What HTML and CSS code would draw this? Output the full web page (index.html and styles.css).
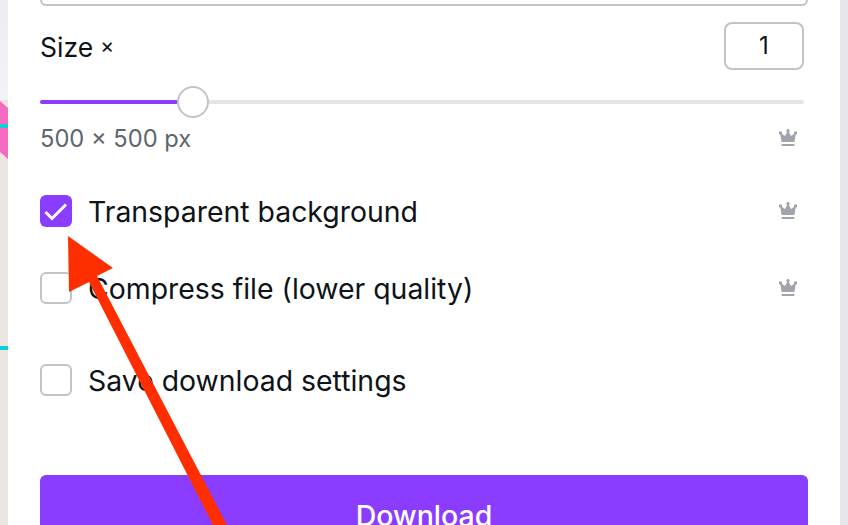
FILE: index.html
```html
<!DOCTYPE html>
<html lang="en">
<head>
    <meta charset="UTF-8">
    <title>Download</title>
    <link rel="stylesheet" href="styles.css">
</head>
<body>
    <div class="page">
        <div class="side-left">
            <div class="pink"></div>
            <div class="cyan cyan-top"></div>
            <div class="cyan cyan-bottom"></div>
        </div>

        <div class="panel">
            <div class="field-end"></div>

            <div class="size-row">
                <span class="size-label">Size <span class="times">×</span></span>
                <div class="size-input">1</div>
            </div>

            <div class="slider">
                <div class="slider-fill"></div>
                <div class="slider-thumb"></div>
            </div>

            <div class="option dims">
                <span>500 × 500 px</span>
                <svg class="crown" viewBox="0 0 20 18"><path d="M10 0a1.6 1.6 0 0 1 .8 3l2.2 4 3.2-2.2a1.6 1.6 0 1 1 1.5.7L16.400 13H3.600L2.300 5.500a1.600 1.600 0 1 1 1.500-.7L7 7l2.200-4A1.600 1.600 0 0 1 10 0z"/><rect x="3.600" y="15" width="12.800" height="2" rx=".5"/></svg>
            </div>

            <div class="option transparent">
                <span class="checkbox checked">
                    <svg viewBox="0 0 32 32"><path d="M5.500 17l6.500 6.500L26 9.500"/></svg>
                </span>
                <span class="option-label">Transparent background</span>
                <svg class="crown" viewBox="0 0 20 18"><path d="M10 0a1.6 1.6 0 0 1 .8 3l2.2 4 3.2-2.2a1.6 1.6 0 1 1 1.5.7L16.400 13H3.600L2.300 5.500a1.600 1.600 0 1 1 1.500-.7L7 7l2.200-4A1.600 1.600 0 0 1 10 0z"/><rect x="3.600" y="15" width="12.800" height="2" rx=".5"/></svg>
            </div>

            <div class="option compress">
                <span class="checkbox"></span>
                <span class="option-label">Compress file (lower quality)</span>
                <svg class="crown" viewBox="0 0 20 18"><path d="M10 0a1.6 1.6 0 0 1 .8 3l2.2 4 3.2-2.2a1.6 1.6 0 1 1 1.5.7L16.400 13H3.600L2.300 5.500a1.600 1.600 0 1 1 1.500-.7L7 7l2.200-4A1.600 1.600 0 0 1 10 0z"/><rect x="3.600" y="15" width="12.800" height="2" rx=".5"/></svg>
            </div>

            <div class="option save">
                <span class="checkbox"></span>
                <span class="option-label">Save download settings</span>
            </div>

            <button class="download-btn">Download</button>
        </div>

        <div class="side-right"></div>

        <svg class="arrow" viewBox="0 0 848 525"><path d="M68 236L113 268L97 276L227 525H213L89 282L69 292z"/></svg>
    </div>
</body>
</html>
```

FILE: styles.css
```css
* {
    box-sizing: border-box;
}
html, body {
    margin: 0;
    height: 100%;
    overflow: hidden;
}
body {
    font-family: 'Inter', 'Noto Sans', sans-serif;
    color: #0e1318;
    background-color: #ffffff;
}
.page {
    position: relative;
    display: flex;
    width: 848px;
    height: 525px;
    overflow: hidden;
}
.side-left {
    position: relative;
    width: 8px;
    flex-shrink: 0;
    background: linear-gradient(#ececf2 0, #f3f3f7 100px, #e9e6e1 100px);
    overflow: hidden;
}
.pink {
    position: absolute;
    left: 0;
    top: 101px;
    width: 8px;
    height: 58px;
    background-color: #f56bc4;
    clip-path: polygon(0 0, 100% 7px, 100% 100%, 0 51px);
}
.cyan {
    position: absolute;
    left: 0;
    width: 8px;
    height: 4px;
    background-color: #12cdd4;
}
.cyan-top {
    top: 124px;
}
.cyan-bottom {
    top: 346px;
}
.side-right {
    width: 8px;
    flex-shrink: 0;
    background-color: #e6e7eb;
}
.panel {
    flex: 1;
    padding: 0 32px;
    background-color: #ffffff;
}
.field-end {
    height: 6px;
    border: 2px solid #c0c4ca;
    border-top: none;
    border-radius: 0 0 8px 8px;
}
.size-row {
    display: flex;
    justify-content: space-between;
    align-items: center;
    margin-top: 16px;
    margin-right: 4px;
}
.size-label {
    display: flex;
    align-items: center;
    gap: 7px;
    padding-top: 2px;
    font-size: 26.500px;
}
.times {
    margin-top: -2px;
    font-size: 21px;
    line-height: 20px;
}
.size-input {
    width: 80px;
    height: 48px;
    border: 2px solid #c0c4ca;
    border-radius: 8px;
    font-size: 24px;
    line-height: 44px;
    text-align: center;
}
.slider {
    position: relative;
    height: 4px;
    margin: 30px 4px 0 0;
    border-radius: 2px;
    background-color: #e3e4e8;
}
.slider-fill {
    width: 138px;
    height: 4px;
    border-radius: 2px;
    background-color: #8b3dff;
}
.slider-thumb {
    position: absolute;
    left: 137px;
    top: -14px;
    width: 32px;
    height: 32px;
    border: 2px solid #c0c4ca;
    border-radius: 50%;
    background-color: #ffffff;
}
.option {
    display: flex;
    align-items: center;
    height: 32px;
    margin-right: 10px;
}
.dims {
    justify-content: space-between;
    margin-top: 18px;
    font-size: 23.700px;
    color: #5e6670;
}
.transparent {
    margin-top: 41px;
}
.compress {
    margin-top: 45px;
}
.save {
    margin-top: 60px;
}
.checkbox {
    width: 32px;
    height: 32px;
    flex-shrink: 0;
    border: 2px solid #c0c4ca;
    border-radius: 6px;
}
.checkbox.checked {
    border: none;
    background-color: #8b3dff;
}
.checkbox svg {
    display: block;
    fill: none;
    stroke: #ffffff;
    stroke-width: 3;
}
.option-label {
    flex: 1;
    margin-left: 16px;
    padding-top: 2px;
    font-size: 28.400px;
    line-height: 32px;
}
.crown {
    width: 20px;
    height: 18px;
    fill: #a1a3ad;
}
.download-btn {
    display: block;
    width: 100%;
    height: 80px;
    margin-top: 79px;
    padding: 0;
    border: none;
    border-radius: 6px;
    background-color: #8b3dff;
    color: #ffffff;
    font-family: inherit;
    font-size: 28.500px;
    font-weight: 500;
}
.arrow {
    position: absolute;
    left: 0;
    top: 0;
    width: 848px;
    height: 525px;
    fill: #ff2e00;
}
```
